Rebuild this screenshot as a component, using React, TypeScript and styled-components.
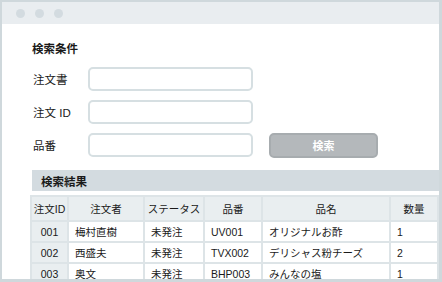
import React from "react";
import styled, { createGlobalStyle } from "styled-components";

const GlobalStyle = createGlobalStyle`
  html, body {
    margin: 0;
    padding: 0;
    background: #ffffff;
  }
  body {
    font-family: "Liberation Sans", "Noto Sans CJK JP", sans-serif;
    color: #1a1a1a;
  }
`;

const Window = styled.div`
  width: 442px;
  height: 282px;
  box-sizing: border-box;
  border: 2px solid #cfd8dc;
  border-right-width: 3px;
  border-bottom-width: 3px;
  overflow: hidden;
  background: #ffffff;
  display: flex;
  flex-direction: column;
`;

const TitleBar = styled.div`
  height: 22px;
  flex: none;
  background: #e9edf0;
  display: flex;
  align-items: center;
  gap: 10px;
  padding-left: 14px;
`;

const Dot = styled.span`
  width: 9px;
  height: 9px;
  border-radius: 50%;
  background: #d3dbe0;
`;

const Content = styled.div`
  padding: 16px 0 0 30px;
  display: flex;
  flex-direction: column;
`;

const SectionTitle = styled.div`
  font-size: 11.5px;
  font-weight: 700;
  line-height: 18px;
  margin-bottom: 9px;
`;

const Form = styled.div`
  display: flex;
  flex-direction: column;
  gap: 9px;
`;

const FormRow = styled.div`
  display: flex;
  align-items: center;
  height: 24px;
`;

const Label = styled.label`
  width: 55px;
  flex: none;
  font-size: 11.5px;
  padding-left: 1px;
`;

const Input = styled.input`
  width: 165px;
  height: 24px;
  box-sizing: border-box;
  border: 2px solid #d6dfe2;
  border-radius: 5px;
  background: #ffffff;
  outline: none;
`;

const SearchButton = styled.button`
  margin-left: 16px;
  width: 109px;
  height: 25px;
  box-sizing: border-box;
  border: 2px solid #a7acaf;
  border-radius: 5px;
  background: #b4b8bb;
  color: #ffffff;
  font-family: "Noto Sans CJK JP", sans-serif;
  font-size: 11px;
  font-weight: 700;
  padding: 0;
`;

const Results = styled.div`
  margin-top: 13px;
  display: flex;
  flex-direction: column;
`;

const ResultsBar = styled.div`
  height: 21px;
  background: #d3dbe0;
  display: flex;
  align-items: center;
  padding-left: 9px;
  font-size: 11.5px;
  font-weight: 700;
  margin-bottom: 6px;
`;

const Table = styled.table`
  width: 407px;
  table-layout: fixed;
  border-collapse: separate;
  border-spacing: 2px;
  margin: -2px 0 0 -2px;
  background: #dde4e7;
  font-size: 10.5px;
`;

const Th = styled.th<{ $w: number }>`
  width: ${({ $w }) => $w}px;
  height: 23px;
  padding: 0;
  background: #e9eef0;
  font-weight: 400;
  text-align: center;
`;

const Td = styled.td<{ $head?: boolean }>`
  height: 19px;
  padding: ${({ $head }) => ($head ? "0" : "0 0 0 6px")};
  background: ${({ $head }) => ($head ? "#e9eef0" : "#ffffff")};
  text-align: ${({ $head }) => ($head ? "center" : "left")};
  white-space: nowrap;
  overflow: hidden;
`;

const columns = [
  { name: "注文ID", w: 35 },
  { name: "注文者", w: 74 },
  { name: "ステータス", w: 58 },
  { name: "品番", w: 56 },
  { name: "品名", w: 126 },
  { name: "数量", w: 46 },
];

const rows = [
  ["001", "梅村直樹", "未発注", "UV001", "オリジナルお酢", "1"],
  ["002", "西盛夫", "未発注", "TVX002", "デリシャス粉チーズ", "2"],
  ["003", "奥文", "未発注", "BHP003", "みんなの塩", "1"],
];

export default function App() {
  return (
    <>
      <GlobalStyle />
      <Window>
        <TitleBar>
          <Dot />
          <Dot />
          <Dot />
        </TitleBar>
        <Content>
          <SectionTitle>検索条件</SectionTitle>
          <Form>
            <FormRow>
              <Label>注文書</Label>
              <Input />
            </FormRow>
            <FormRow>
              <Label>注文 ID</Label>
              <Input />
            </FormRow>
            <FormRow>
              <Label>品番</Label>
              <Input />
              <SearchButton>検索</SearchButton>
            </FormRow>
          </Form>
          <Results>
            <ResultsBar>検索結果</ResultsBar>
            <Table>
              <thead>
                <tr>
                  {columns.map((c) => (
                    <Th key={c.name} $w={c.w}>
                      {c.name}
                    </Th>
                  ))}
                </tr>
              </thead>
              <tbody>
                {rows.map((r) => (
                  <tr key={r[0]}>
                    {r.map((v, i) => (
                      <Td key={i} $head={i === 0}>
                        {v}
                      </Td>
                    ))}
                  </tr>
                ))}
              </tbody>
            </Table>
          </Results>
        </Content>
      </Window>
    </>
  );
}
